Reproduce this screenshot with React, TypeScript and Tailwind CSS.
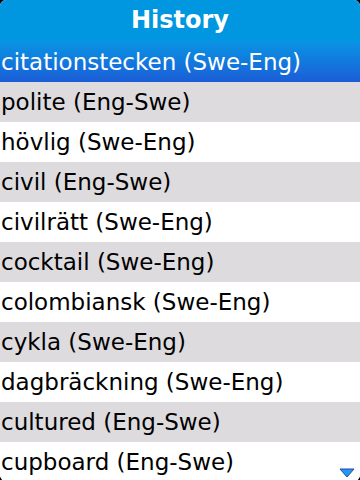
import React from "react";

const items = [
  "polite (Eng-Swe)",
  "hövlig (Swe-Eng)",
  "civil (Eng-Swe)",
  "civilrätt (Swe-Eng)",
  "cocktail (Swe-Eng)",
  "colombiansk (Swe-Eng)",
  "cykla (Swe-Eng)",
  "dagbräckning (Swe-Eng)",
  "cultured (Eng-Swe)",
  "cupboard (Eng-Swe)",
];

export default function App() {
  return (
    <div
      className="relative w-[360px] h-[480px] overflow-hidden bg-black"
      style={{ fontFamily: '"DejaVu Sans", sans-serif' }}
    >
      <div className="h-[481px] rounded-[6px] overflow-hidden bg-white">
        <div className="h-[41px] bg-[#0096e0] flex items-center justify-center">
          <span className="text-white font-bold text-[24px] leading-[41px]">History</span>
        </div>
        <div className="h-[41px] bg-gradient-to-b from-[#0994e4] to-[#1b5dd6] flex items-center pl-[1px]">
          <span className="text-white text-[23px] leading-[40px] whitespace-nowrap">
            citationstecken (Swe-Eng)
          </span>
        </div>
        {items.map((t, i) => (
          <div
            key={t}
            className={
              "h-[40px] flex items-center pl-[1px] " +
              (i % 2 === 0 ? "bg-[#dddbde]" : "bg-white")
            }
          >
            <span className="text-black text-[23px] leading-[40px] whitespace-nowrap">{t}</span>
          </div>
        ))}
      </div>
      <svg
        className="absolute left-[339px] top-[468px]"
        width="16"
        height="10"
        viewBox="0 0 16 10"
      >
        <polygon points="1,1 15,1 8,9" fill="#2b95f2" stroke="#164fa8" strokeWidth="1" />
      </svg>
    </div>
  );
}
